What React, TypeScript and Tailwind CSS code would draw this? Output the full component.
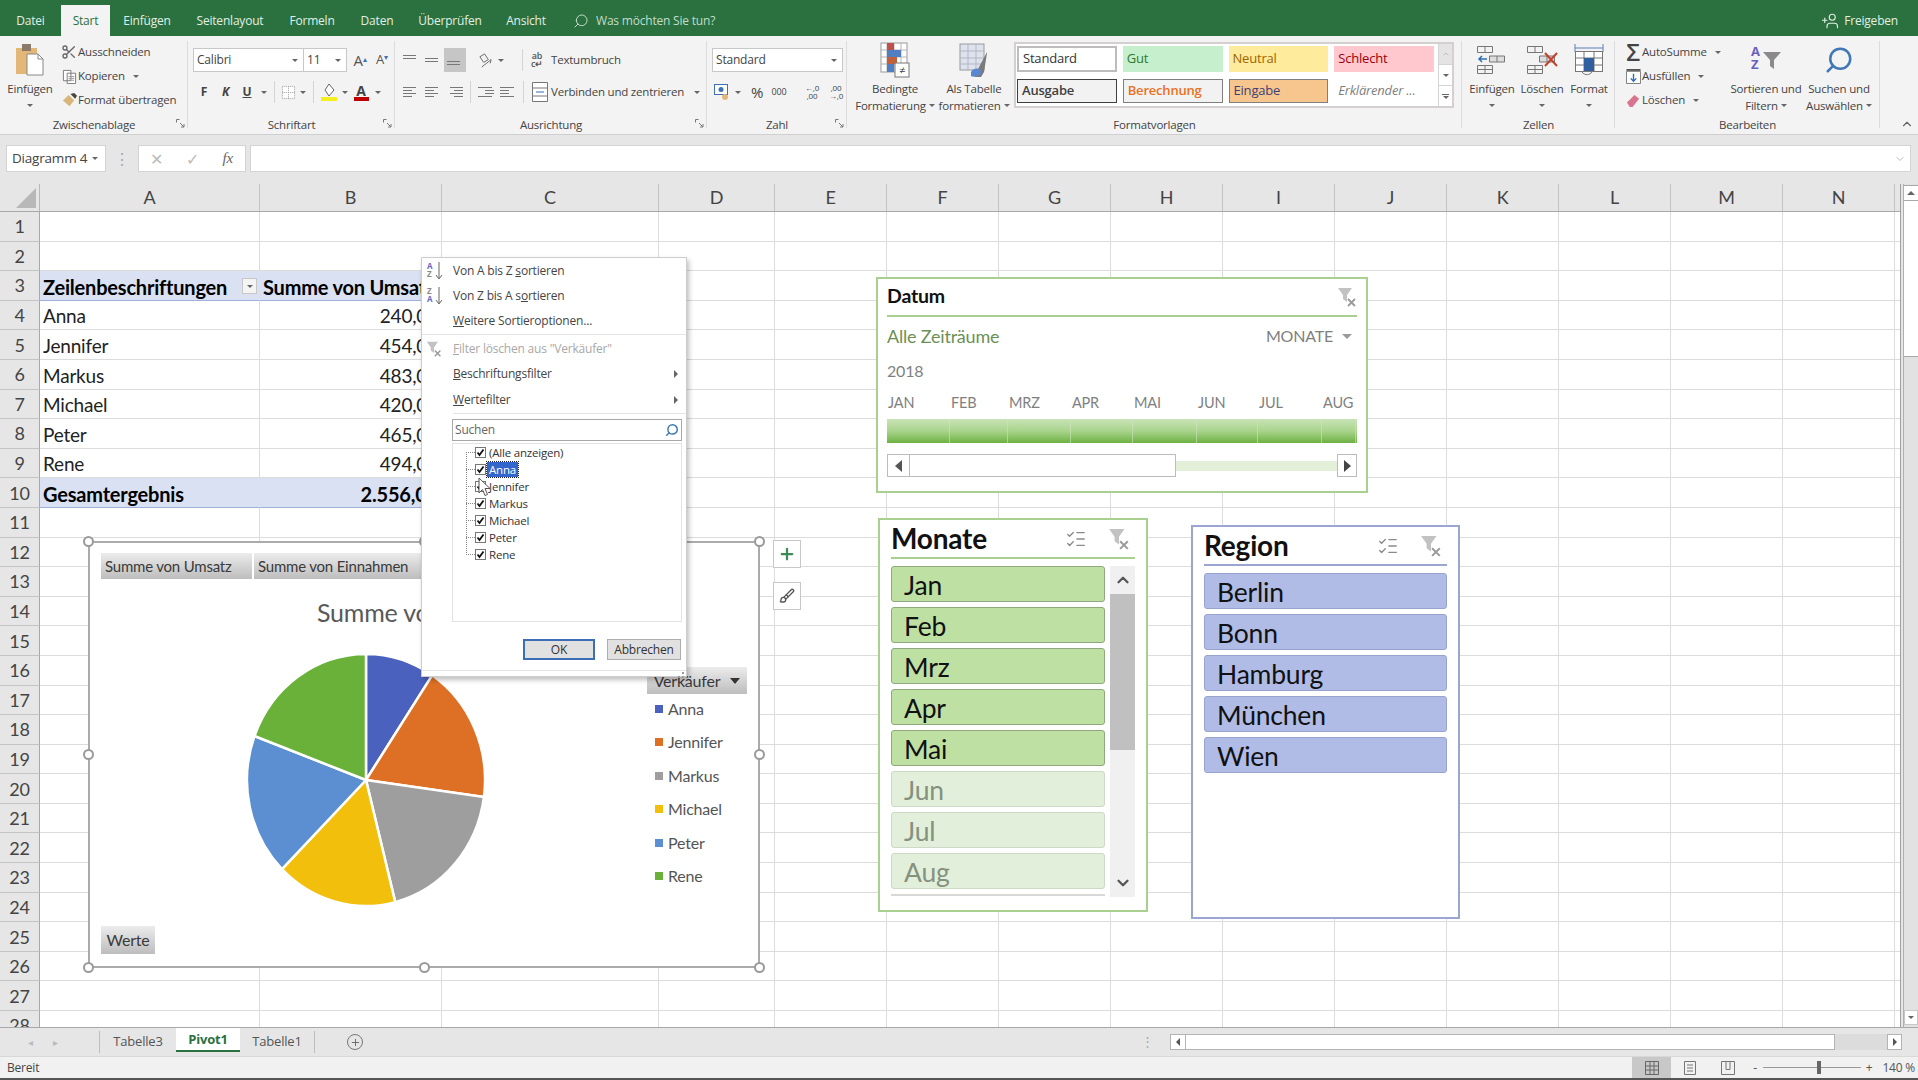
import { ReactNode } from 'react';
import { Scissors, Search, UserPlus, Plus, ChevronUp, ChevronDown, ListChecks, Brush } from 'lucide-react';

const calibri = "font-['Lato','Carlito',sans-serif]";

function Caret({ className = '' }: { className?: string }) {
  return <span className={`inline-block w-0 h-0 border-x-[3px] border-x-transparent border-t-[3px] border-t-[#666] ${className}`} />;
}

function Sep() {
  return <span className="w-px h-[22px] bg-[#d4d4d4] mx-[4px]" />;
}

function Launcher() {
  return (
    <svg viewBox="0 0 9 9" className="absolute right-[3px] bottom-[6px] w-[9px] h-[9px]" fill="none" stroke="#777">
      <path d="M0.5 3.5v-3h3M4 4l4 4M8 5v3H5" />
    </svg>
  );
}

function Group({ label, className, launcher, children }: { label: string; className: string; launcher?: boolean; children: ReactNode }) {
  return (
    <div className={`relative flex flex-col h-full ${className}`}>
      <div className="h-[80px] pt-[4px]">{children}</div>
      <div className="h-[18px] flex items-center justify-center text-[11.5px] text-[#444]">{label}</div>
      {launcher && <Launcher />}
      <div className="absolute right-0 top-[5px] bottom-[6px] w-px bg-[#dcdcdc]" />
    </div>
  );
}

function BigBtn({ icon, lines, caret, className }: { icon: ReactNode; lines: string[]; caret?: boolean; className: string }) {
  return (
    <div className={`flex flex-col items-center shrink-0 text-[11.5px] leading-[17px] text-[#444] ${className}`}>
      <div className="h-[40px] flex items-center justify-center">{icon}</div>
      {lines.map((l, i) => (
        <div key={l} className="flex items-center gap-[3px] whitespace-nowrap">
          {l}
          {caret && i === lines.length - 1 && lines.length > 1 && <Caret />}
        </div>
      ))}
      {caret && lines.length === 1 && <div className="h-[17px] flex items-center"><Caret /></div>}
    </div>
  );
}

function SmallBtn({ icon, text, caret }: { icon: ReactNode; text: string; caret?: boolean }) {
  return (
    <div className="h-[24px] flex items-center text-[11.5px] text-[#444] whitespace-nowrap">
      <span className="w-[18px] flex justify-center shrink-0">{icon}</span>
      <span>{text}</span>
      {caret && <Caret className="ml-[8px]" />}
    </div>
  );
}

function Lines({ rows, active }: { rows: number[]; active?: boolean }) {
  return (
    <svg viewBox="0 0 16 14" className="w-[16px] h-[14px]" stroke={active ? '#666' : '#777'} strokeWidth="1">
      {rows.map((w, i) => (
        <line key={i} x1={w < 0 ? 16 + w : 0} x2={w < 0 ? 16 : w} y1={2.5 + i * 3} y2={2.5 + i * 3} />
      ))}
    </svg>
  );
}

function Slot({ children, className = 'w-[22px]' }: { children: ReactNode; className?: string }) {
  return <span className={`h-[24px] flex items-center justify-center shrink-0 ${className}`}>{children}</span>;
}

function PasteIcon() {
  return (
    <svg viewBox="0 0 30 34" className="w-[30px] h-[34px]">
      <rect x="1" y="5" width="21" height="26" fill="#e3b777" />
      <rect x="7" y="1" width="9" height="7" fill="#8a7a6a" />
      <path d="M12 11h11l5 5v16H12z" fill="#fff" stroke="#888" />
      <path d="M23 11v5h5" fill="none" stroke="#888" />
    </svg>
  );
}

function CondIcon() {
  return (
    <svg viewBox="0 0 30 36" className="w-[30px] h-[36px]">
      <rect x="1" y="1" width="26" height="29" fill="#fff" stroke="#9a9a9a" />
      <path d="M7 1v29M14 1v29M21 1v29M1 8h26M1 15h26M1 22h26" stroke="#b5b5b5" />
      <rect x="7" y="1" width="7" height="7" fill="#c0504d" />
      <rect x="7" y="8" width="14" height="7" fill="#4f7fc0" />
      <rect x="7" y="15" width="10" height="7" fill="#c0603d" />
      <rect x="7" y="22" width="7" height="8" fill="#4f7fc0" />
      <rect x="15" y="21" width="14" height="14" fill="#fff" stroke="#777" />
      <text x="22" y="32" fontSize="11" textAnchor="middle" fill="#444">≠</text>
    </svg>
  );
}

function TableIcon() {
  return (
    <svg viewBox="0 0 30 36" className="w-[30px] h-[36px]">
      <rect x="1" y="2" width="24" height="26" fill="#dde2ee" stroke="#9a9a9a" />
      <path d="M9 2v26M17 2v26M1 9h24M1 16h24M1 22h24" stroke="#b3b7c2" />
      <path d="M28 10l-9 17-4 5 1 3h6l3-5 3-19z" fill="#7a7a7a" />
      <path d="M12 30c2-4 8-5 10-1s-7 7-10 5z" fill="#5a86cf" />
    </svg>
  );
}

function CellsIcon({ kind }: { kind: 'insert' | 'delete' | 'format' }) {
  if (kind === 'format') {
    return (
      <svg viewBox="0 0 30 34" className="w-[30px] h-[34px]" fill="none" stroke="#777">
        <path d="M1 5h28M1 1v8M29 1v8" stroke="#5b7fb5" />
        <rect x="1.500" y="8.500" width="27" height="20" fill="#fff" />
        <path d="M10 8v21M20 8v21M1 15h28M1 22h28" />
        <rect x="10" y="15" width="10" height="13" fill="#2f5f9f" stroke="none" />
        <path d="M8 29c3 4 8 3 10 0" />
      </svg>
    );
  }
  return (
    <svg viewBox="0 0 32 30" className="w-[32px] h-[30px]" fill="none" stroke="#777">
      <path d="M1.500 1.500h15v6h-15zM9 1.500v6M1.500 20.500h15v8h-15zM1.500 24.500h15M9 20.500v8" />
      <path d="M13.500 11h15v6h-15zM21 11v6" fill="#ddd" />
      {kind === 'insert' && <path d="M11 14H3M6 11l-3 3 3 3" stroke="#2f6fb5" strokeWidth="1.500" />}
      {kind === 'delete' && <path d="M19 8l12 13M31 8L19 21" stroke="#c8402c" strokeWidth="2" />}
    </svg>
  );
}

function FilterClear({ className = 'w-[20px] h-[20px]' }: { className?: string }) {
  return (
    <svg viewBox="0 0 20 20" className={className}>
      <path d="M1 1h14l-5 7v7l-4-3V8z" fill="#c2c2c2" />
      <path d="M11 12l7 7M18 12l-7 7" stroke="#9a9a9a" strokeWidth="1.800" />
    </svg>
  );
}

function SortIcon({ down }: { down: boolean }) {
  return (
    <span className="relative w-[16px] h-[18px] flex flex-col items-start text-[8px] leading-[8px] font-bold">
      <span className={down ? 'text-[#6a6ac0]' : 'text-[#888]'}>{down ? 'A' : 'Z'}</span>
      <span className={down ? 'text-[#888]' : 'text-[#6a6ac0]'}>{down ? 'Z' : 'A'}</span>
      <svg viewBox="0 0 8 18" className="absolute left-[8px] top-0 w-[8px] h-[18px]" fill="none" stroke="#666">
        <path d="M4 0v16M1 13l3 4 3-4" />
      </svg>
    </span>
  );
}

function Ribbon() {
  return (
    <div className="flex h-[99px] bg-[#f3f3f3] border-b border-[#cfcfcf]">
      <Group label="Zwischenablage" className="w-[188px]" launcher>
        <div className="flex">
          <BigBtn className="w-[60px]" icon={<PasteIcon />} lines={['Einfügen']} caret />
          <div className="flex flex-col">
            <SmallBtn icon={<Scissors size={16} color="#666" />} text="Ausschneiden" />
            <SmallBtn
              icon={
                <svg viewBox="0 0 16 16" className="w-[15px] h-[15px]" fill="#fff" stroke="#777">
                  <path d="M1.500 1.500h8v11h-8zM5.500 4.500h9v11h-9z" />
                  <path d="M7 8h6M7 10h6M7 12h6" stroke="#999" />
                </svg>
              }
              text="Kopieren"
              caret
            />
            <SmallBtn
              icon={
                <svg viewBox="0 0 16 16" className="w-[15px] h-[15px]">
                  <path d="M1 8l6-6 6 6-5 6z" fill="#d8b67a" />
                  <path d="M9 1l4-1 3 3-2 3z" fill="#444" />
                </svg>
              }
              text="Format übertragen"
            />
          </div>
        </div>
      </Group>
      <Group label="Schriftart" className="w-[207px]" launcher>
        <div className="pl-[5px] pt-[8px] flex flex-col gap-[8px]">
          <div className="h-[24px] flex items-center">
            <div className="w-[111px] h-[24px] bg-white border border-[#c8c8c8] flex items-center justify-between px-[3px] text-[12px] text-[#444]">
              Calibri <Caret className="mr-[2px]" />
            </div>
            <div className="w-[43px] h-[24px] bg-white border border-l-0 border-[#c8c8c8] flex items-center justify-between px-[3px] text-[12px] text-[#444]">
              11 <Caret className="mr-[2px]" />
            </div>
            <Slot className="w-[22px] ml-[2px]"><span className="text-[15px] text-[#555]">A<sup className="text-[8px] text-[#3f6fb5]">▴</sup></span></Slot>
            <Slot className="w-[22px]"><span className="text-[13px] text-[#555]">A<sup className="text-[8px] text-[#3f6fb5]">▾</sup></span></Slot>
          </div>
          <div className="h-[24px] flex items-center text-[12px] text-[#444]">
            <Slot className="w-[22px]"><b>F</b></Slot>
            <Slot className="w-[21px]"><b className="italic">K</b></Slot>
            <Slot className="w-[22px]"><b className="underline">U</b></Slot>
            <Slot className="w-[12px]"><Caret /></Slot>
            <Sep />
            <Slot className="w-[18px]">
              <svg viewBox="0 0 16 16" className="w-[15px] h-[15px]" fill="#fff" stroke="#999">
                <path d="M1.500 1.500h13v13h-13zM8 1.500v13M1.500 8h13" strokeDasharray="1 1" />
              </svg>
            </Slot>
            <Slot className="w-[12px]"><Caret /></Slot>
            <Sep />
            <Slot className="w-[22px]">
              <svg viewBox="0 0 16 18" className="w-[16px] h-[18px]">
                <path d="M8 1l5 6-5 6-4-6z" fill="#fff" stroke="#666" />
                <rect x="0" y="14" width="16" height="4" fill="#f4f01e" />
              </svg>
            </Slot>
            <Slot className="w-[10px]"><Caret /></Slot>
            <Slot className="w-[22px]">
              <span className="flex flex-col items-center leading-[13px] font-bold text-[#444] text-[14px]">
                A
                <span className="w-[15px] h-[4px] bg-[#c00000]" />
              </span>
            </Slot>
            <Slot className="w-[12px]"><Caret /></Slot>
          </div>
        </div>
      </Group>
      <Group label="Ausrichtung" className="w-[312px]" launcher>
        <div className="pl-[5px] pt-[8px] flex flex-col gap-[8px] text-[11.5px] text-[#444]">
          <div className="h-[24px] flex items-center">
            <Slot><Lines rows={[13, 13]} /></Slot>
            <Slot><Lines rows={[0, 13, 13]} /></Slot>
            <Slot className="w-[22px] bg-[#c6c6c6]"><Lines rows={[0, 0, 13, 13]} /></Slot>
            <Slot className="w-[22px] ml-[8px]">
              <svg viewBox="0 0 16 16" className="w-[15px] h-[15px]" fill="none" stroke="#666">
                <path d="M2 4l5-3 4 6-5 3zM4 15l10-8M14 7l-1 4" />
              </svg>
            </Slot>
            <Slot className="w-[10px]"><Caret /></Slot>
            <span className="w-px h-[22px] bg-[#d4d4d4] ml-[16px]" />
            <Slot className="w-[28px]">
              <span className="text-[9px] leading-[8px] font-semibold text-center text-[#555]">ab<br />c↵</span>
            </Slot>
            <span>Textumbruch</span>
          </div>
          <div className="h-[24px] flex items-center">
            <Slot><Lines rows={[13, 9, 13, 9]} /></Slot>
            <Slot><Lines rows={[13, 9, 13, 9]} /></Slot>
            <Slot><Lines rows={[-13, -9, -13, -9]} /></Slot>
            <span className="w-px h-[22px] bg-[#d4d4d4] mx-[4px]" />
            <Slot><Lines rows={[14, -9, -9, 14]} /></Slot>
            <Slot><Lines rows={[14, 9, 9, 14]} /></Slot>
            <span className="w-px h-[22px] bg-[#d4d4d4] mx-[4px]" />
            <Slot className="w-[23px]">
              <svg viewBox="0 0 16 20" className="w-[16px] h-[20px]" fill="#fff" stroke="#777">
                <path d="M0.500 0.500h15v19h-15zM0.500 6h15M0.500 14h15" />
                <path d="M4 10h8" stroke="#2f6fb5" />
              </svg>
            </Slot>
            <span>Verbinden und zentrieren</span>
            <Caret className="ml-[10px]" />
          </div>
        </div>
      </Group>
      <Group label="Zahl" className="w-[140px]" launcher>
        <div className="pl-[5px] pt-[8px] flex flex-col gap-[8px] text-[12px] text-[#444]">
          <div className="w-[131px] h-[24px] bg-white border border-[#c8c8c8] flex items-center justify-between px-[3px]">
            Standard <Caret className="mr-[2px]" />
          </div>
          <div className="h-[24px] flex items-center">
            <Slot className="w-[20px]">
              <svg viewBox="0 0 16 16" className="w-[16px] h-[16px]">
                <rect x="0.500" y="0.500" width="13" height="10" fill="#fff" stroke="#3f6fb5" />
                <circle cx="7" cy="5.500" r="2.500" fill="#3f6fb5" />
                <circle cx="11" cy="13" r="3" fill="#e3b777" />
              </svg>
            </Slot>
            <Slot className="w-[12px]"><Caret /></Slot>
            <Slot className="w-[26px] text-[15px]">%</Slot>
            <Slot className="w-[18px] text-[9px]">000</Slot>
            <span className="w-px h-[22px] bg-[#d4d4d4] mx-[6px]" />
            <Slot className="w-[24px] text-[8px] leading-[8px] text-center"><span>←,0<br />,00</span></Slot>
            <Slot className="w-[24px] text-[8px] leading-[8px] text-center"><span>,00<br />→,0</span></Slot>
          </div>
        </div>
      </Group>
      <Group label="Formatvorlagen" className="w-[615px]">
        <div className="flex pl-[8px]">
          <BigBtn className="w-[80px]" icon={<CondIcon />} lines={['Bedingte', 'Formatierung']} caret />
          <BigBtn className="w-[78px]" icon={<TableIcon />} lines={['Als Tabelle', 'formatieren']} caret />
          <div className="flex mt-[2px] ml-[1px] h-[66px] w-[440px] bg-white border-2 border-[#d4d0d0]">
            <div className="flex-1 grid grid-cols-4 gap-x-[6px] gap-y-[5px] py-[2px] pl-[1px] pr-[4px] text-[13px]">
              <div className="h-[26px] border-2 border-[#bdbdbd] px-[4px] flex items-center text-[#333]">Standard</div>
              <div className="h-[26px] bg-[#c6efce] px-[4px] flex items-center text-[#2c7a2c]">Gut</div>
              <div className="h-[26px] bg-[#ffeb9c] px-[4px] flex items-center text-[#9c6500]">Neutral</div>
              <div className="h-[26px] bg-[#ffc7ce] px-[4px] flex items-center text-[#9c0006]">Schlecht</div>
              <div className="h-[24px] bg-[#f2f2f2] border border-[#3f3f3f] px-[4px] flex items-center font-semibold text-[#3f3f3f]">Ausgabe</div>
              <div className="h-[24px] bg-[#f2f2f2] border border-[#7f7f7f] px-[4px] flex items-center font-semibold text-[#e8701e]">Berechnung</div>
              <div className="h-[24px] bg-[#f7c68f] border border-[#7f7f7f] px-[4px] flex items-center text-[#3f3f76]">Eingabe</div>
              <div className="h-[24px] px-[4px] flex items-center italic text-[#7f7f7f] whitespace-nowrap">Erklärender ...</div>
            </div>
            <div className="w-[14px] flex flex-col border-l border-[#d4d4d4] bg-white">
              <div className="flex-1 bg-[#e4e4e4] flex items-center justify-center"><ChevronUp size={8} color="#aaa" /></div>
              <div className="flex-1 border-y border-[#d4d4d4] flex items-center justify-center"><Caret /></div>
              <div className="flex-1 flex flex-col items-center justify-center gap-[1px]"><span className="w-[7px] h-px bg-[#666]" /><Caret /></div>
            </div>
          </div>
        </div>
      </Group>
      <Group label="Zellen" className="w-[153px]">
        <div className="flex pl-[6px]">
          <BigBtn className="w-[48px]" icon={<CellsIcon kind="insert" />} lines={['Einfügen']} caret />
          <BigBtn className="w-[52px]" icon={<CellsIcon kind="delete" />} lines={['Löschen']} caret />
          <BigBtn className="w-[42px]" icon={<CellsIcon kind="format" />} lines={['Format']} caret />
        </div>
      </Group>
      <Group label="Bearbeiten" className="w-[265px]">
        <div className="flex pl-[9px]">
          <div className="flex flex-col w-[109px]">
            <SmallBtn icon={<span className="text-[24px] leading-[20px] font-semibold text-[#444]">Σ</span>} text="AutoSumme" caret />
            <SmallBtn
              icon={
                <svg viewBox="0 0 16 16" className="w-[15px] h-[15px]" fill="#fff" stroke="#777">
                  <path d="M0.500 2.500h15v13h-15z" />
                  <path d="M0.500 1h15" strokeWidth="2" stroke="#555" />
                  <path d="M8 5v8M5 10l3 3 3-3" stroke="#2f6fb5" fill="none" strokeWidth="1.500" />
                </svg>
              }
              text="Ausfüllen"
              caret
            />
            <SmallBtn
              icon={
                <svg viewBox="0 0 16 16" className="w-[15px] h-[15px]">
                  <path d="M1 10l8-8 5 4-7 9H4z" fill="#d9748f" />
                </svg>
              }
              text="Löschen"
              caret
            />
          </div>
          <BigBtn
            className="w-[66px]"
            icon={
              <span className="relative w-[30px] h-[30px] text-[13px] leading-[13px] font-bold text-[#6a5fc0]">
                A<br />Z
                <svg viewBox="0 0 18 18" className="absolute left-[12px] top-[7px] w-[18px] h-[18px]"><path d="M0 0h18l-7 8v9l-4-3V8z" fill="#8a8a8a" /></svg>
              </span>
            }
            lines={['Sortieren und', 'Filtern']}
            caret
          />
          <BigBtn
            className="w-[80px]"
            icon={<Search size={30} color="#3f78b5" strokeWidth={2} className="-scale-x-100" />}
            lines={['Suchen und', 'Auswählen']}
            caret
          />
        </div>
      </Group>
      <div className="flex-1 relative">
        <ChevronUp size={14} color="#666" className="absolute right-[4px] bottom-[3px]" />
      </div>
    </div>
  );
}

const colWidths = [
  'w-[220px]', 'w-[182px]', 'w-[217px]', 'w-[116px]',
  'w-[112px]', 'w-[112px]', 'w-[112px]', 'w-[112px]', 'w-[112px]',
  'w-[112px]', 'w-[112px]', 'w-[112px]', 'w-[112px]', 'w-[112px]',
];
const colNames = ['A', 'B', 'C', 'D', 'E', 'F', 'G', 'H', 'I', 'J', 'K', 'L', 'M', 'N'];

const pivot: Record<number, [string, string]> = {
  3: ['Zeilenbeschriftungen', 'Summe von Umsatz'],
  4: ['Anna', '240,00'],
  5: ['Jennifer', '454,00'],
  6: ['Markus', '483,00'],
  7: ['Michael', '420,00'],
  8: ['Peter', '465,00'],
  9: ['Rene', '494,00'],
  10: ['Gesamtergebnis', '2.556,00'],
};

function Sheet() {
  const rows = Array.from({ length: 28 }, (_, i) => i + 1);
  return (
    <div className={`h-[843px] overflow-hidden flex bg-[#e6e6e6] ${calibri}`}>
      <div className="w-[1901px] shrink-0 bg-white border-r border-[#a0a0a0]">
        <div className="flex h-[28px] bg-[#e6e6e6] border-b border-[#a8a8a8]">
          <div className="w-[40px] shrink-0 border-r border-[#b8b8b8] relative">
            <div className="absolute right-[3px] bottom-[3px] w-0 h-0 border-l-[20px] border-l-transparent border-b-[20px] border-b-[#b8b8b8]" />
          </div>
          {colNames.map((c, i) => (
            <div key={c} className={`${colWidths[i]} shrink-0 flex items-center justify-center text-[18px] text-[#444] border-r border-[#c4c4c4]`}>{c}</div>
          ))}
        </div>
        {rows.map((r) => {
          const band = r === 3 || r === 10;
          const data = pivot[r];
          return (
            <div key={r} className="flex h-[29.6px]">
              <div className="w-[40px] shrink-0 bg-[#e6e6e6] border-r border-[#a8a8a8] border-b border-b-[#c4c4c4] flex items-center justify-center pt-[1px] text-[18px] text-[#444]">{r}</div>
              {colNames.map((c, i) => (
                <div
                  key={c}
                  className={`${colWidths[i]} shrink-0 relative flex items-center pt-[3px] whitespace-nowrap border-r border-b border-[#dcdcdc] ${band && i < 3 ? 'bg-[#d9e1f2] border-r-[#d9e1f2] border-b-[#9fb0dc] font-bold text-black text-[20px]' : 'text-[19px] text-[#222]'}`}
                >
                  {data && i === 0 && <span className="pl-[3px]">{data[0]}</span>}
                  {data && i === 1 && (r === 3 ? <span className="pl-[3px]">{data[1]}</span> : <span className="ml-auto pr-[3px]">{data[1]}</span>)}
                  {r === 3 && i === 0 && (
                    <span className="absolute right-[2px] top-[7px] w-[15px] h-[16px] bg-[#f4f4f4] border border-[#c8c8c8] flex items-center justify-center"><Caret /></span>
                  )}
                </div>
              ))}
              <div className="flex-1 border-b border-[#dcdcdc]" />
            </div>
          );
        })}
      </div>
      <div className="flex-1 flex flex-col ml-[2px] border-l border-[#b0b0b0] bg-[#e2e2e2]">
        <div className="h-[16px] mt-[1px] bg-white border-y border-[#a8a8a8] flex items-center justify-center">
          <span className="w-0 h-0 border-x-[4px] border-x-transparent border-b-[4px] border-b-[#666]" />
        </div>
        <div className="h-[156px] bg-white border-b border-[#a8a8a8]" />
        <div className="flex-1" />
        <div className="h-[15px] mb-[2px] bg-white border border-[#c8c8c8] flex items-center justify-center"><Caret /></div>
      </div>
    </div>
  );
}

function Handle({ className }: { className: string }) {
  return <span className={`absolute w-[11px] h-[11px] rounded-full bg-white border-2 border-[#9a9a9a] ${className}`} />;
}

const sellers = [
  { name: 'Anna', value: 240, color: '#4a62bd', swatch: 'bg-[#4a62bd]' },
  { name: 'Jennifer', value: 454, color: '#dd7024', swatch: 'bg-[#dd7024]' },
  { name: 'Markus', value: 483, color: '#9e9e9e', swatch: 'bg-[#9e9e9e]' },
  { name: 'Michael', value: 420, color: '#f2bf0c', swatch: 'bg-[#f2bf0c]' },
  { name: 'Peter', value: 465, color: '#5b8fd1', swatch: 'bg-[#5b8fd1]' },
  { name: 'Rene', value: 494, color: '#69b138', swatch: 'bg-[#69b138]' },
];

function Pie() {
  const total = sellers.reduce((s, x) => s + x.value, 0);
  const pt = (a: number) => [120 + 119 * Math.sin(a), 127 - 126 * Math.cos(a)];
  let acc = 0;
  return (
    <svg viewBox="0 0 240 254" className="w-[240px] h-[254px]">
      {sellers.map((s) => {
        const a0 = (acc / total) * Math.PI * 2;
        acc += s.value;
        const a1 = (acc / total) * Math.PI * 2;
        const [x0, y0] = pt(a0);
        const [x1, y1] = pt(a1);
        return <path key={s.name} d={`M120 127L${x0} ${y0}A119 126 0 0 1 ${x1} ${y1}Z`} fill={s.color} stroke="#fff" strokeWidth="2.500" />;
      })}
    </svg>
  );
}

const chartBtn = 'absolute flex items-center bg-gradient-to-b from-[#ececec] to-[#bdbdbd] text-[#3a3a3a] whitespace-nowrap';

function Chart() {
  return (
    <div className={`absolute left-[88px] top-[541px] w-[672px] h-[427px] bg-white border-2 border-[#ababab] ${calibri}`}>
      <div className={`${chartBtn} left-[11px] top-[10px] w-[151px] h-[26px] text-[15px] pl-[4px]`}>Summe von Umsatz</div>
      <div className={`${chartBtn} left-[164px] top-[10px] w-[168px] h-[26px] text-[15px] pl-[4px]`}>Summe von Einnahmen</div>
      <div className="absolute left-[227px] top-[53px] text-[25px] leading-[32px] text-[#595959] whitespace-nowrap">Summe von Umsatz</div>
      <div className="absolute left-[156px] top-[110px]"><Pie /></div>
      <div className={`${chartBtn} justify-center left-[557px] top-[124px] w-[100px] h-[27px] text-[16px] gap-[10px]`}>
        Verkäufer <span className="w-0 h-0 border-x-[5px] border-x-transparent border-t-[6px] border-t-[#333]" />
      </div>
      <div className="absolute left-[565px] top-[149px] flex flex-col">
        {sellers.map((s) => (
          <div key={s.name} className="h-[33.5px] flex items-center gap-[5px] text-[16px] text-[#555]">
            <span className={`w-[8px] h-[8px] ${s.swatch}`} />
            {s.name}
          </div>
        ))}
      </div>
      <div className={`${chartBtn} justify-center left-[11px] top-[383px] w-[54px] h-[28px] text-[16px]`}>Werte</div>
      <Handle className="-left-[7px] -top-[7px]" />
      <Handle className="left-[329px] -top-[7px]" />
      <Handle className="-right-[7px] -top-[7px]" />
      <Handle className="-left-[7px] top-[206px]" />
      <Handle className="-right-[7px] top-[206px]" />
      <Handle className="-left-[7px] -bottom-[7px]" />
      <Handle className="left-[329px] -bottom-[7px]" />
      <Handle className="-right-[7px] -bottom-[7px]" />
    </div>
  );
}

function FilterMenu() {
  const names = ['(Alle anzeigen)', 'Anna', 'Jennifer', 'Markus', 'Michael', 'Peter', 'Rene'];
  const row = 'h-[25.4px] flex items-center text-[12px] text-[#444] whitespace-nowrap';
  return (
    <div className="absolute left-[421px] top-[257px] w-[266px] h-[420px] bg-white border border-[#cdcdcd] shadow-[2px_3px_5px_rgba(0,0,0,0.25)] flex flex-col">
      <div className={row}><span className="w-[31px] pl-[5px]"><SortIcon down /></span><span>Von A bis Z <u>s</u>ortieren</span></div>
      <div className={row}><span className="w-[31px] pl-[5px]"><SortIcon down={false} /></span><span>Von Z bis A s<u>o</u>rtieren</span></div>
      <div className={row}><span className="w-[31px]" /><span><u>W</u>eitere Sortieroptionen...</span></div>
      <div className="h-px mb-[1px] bg-[#e4e4e4]" />
      <div className={`${row} text-[#a8a8a8]`}><span className="w-[31px] pl-[4px]"><FilterClear className="w-[16px] h-[16px]" /></span><span><u>F</u>ilter löschen aus "Verkäufer"</span></div>
      <div className={`${row} justify-between pr-[8px]`}><span className="pl-[31px]"><u>B</u>eschriftungsfilter</span><span className="w-0 h-0 border-y-[4px] border-y-transparent border-l-[4px] border-l-[#666]" /></div>
      <div className={`${row} justify-between pr-[8px]`}><span className="pl-[31px]"><u>W</u>ertefilter</span><span className="w-0 h-0 border-y-[4px] border-y-transparent border-l-[4px] border-l-[#666]" /></div>
      <div className="h-px mt-[1px] bg-[#e4e4e4] ml-[31px]" />
      <div className="ml-[30px] mt-[5px] w-[230px] h-[22px] border border-[#a8a8a8] flex items-center justify-between px-[2px] text-[12px] text-[#666]">
        Suchen
        <Search size={14} color="#3f78b5" strokeWidth={2.5} className="-scale-x-100" />
      </div>
      <div className="relative ml-[30px] mt-[2px] w-[230px] h-[179px] border border-[#e2e2e2]">
        <div className="absolute left-[13px] top-[8px] h-[103px] border-l border-dotted border-[#888]" />
        {names.map((n) => (
          <div key={n} className="relative h-[17px] flex items-center pl-[22px] text-[11.5px] text-[#333]">
            <span className="absolute left-[13px] w-[9px] border-t border-dotted border-[#888]" />
            <span className="relative w-[11px] h-[11px] bg-white border border-[#777] shrink-0">
              <svg viewBox="0 0 11 11" className="absolute -left-px -top-px w-[11px] h-[11px]" fill="none" stroke="#111" strokeWidth="1.800"><path d="M2.500 5.500l2 2.500 4-5.500" /></svg>
            </span>
            {n === 'Anna' ? (
              <span className="ml-[1px] px-[2px] bg-[#3366cc] text-white outline-1 outline-dotted outline-[#222] leading-[15px]">{n}</span>
            ) : (
              <span className="ml-[3px]">{n}</span>
            )}
          </div>
        ))}
      </div>
      <div className="flex justify-end gap-[12px] mt-[17px] pr-[5px] text-[12px] text-[#333]">
        <div className="w-[72px] h-[21px] bg-[#e1e1e1] border-2 border-[#3d6db5] flex items-center justify-center">OK</div>
        <div className="w-[74px] h-[21px] bg-[#e1e1e1] border border-[#adadad] flex items-center justify-center">Abbrechen</div>
      </div>
      <div className="relative h-px mt-[10px] bg-[#e4e4e4]">
        <span className="absolute right-[2px] top-[2px] w-[6px] h-[6px] border-r-2 border-b-2 border-dotted border-[#999]" />
      </div>
      <svg viewBox="0 0 12 20" className="absolute left-[56px] top-[219px] w-[12px] h-[20px]">
        <path d="M1 1v15l3.500-3.500 2.500 6 2.500-1-2.500-6h5z" fill="#fff" stroke="#555" />
      </svg>
    </div>
  );
}

function TimelineSlicer() {
  const months = [
    ['JAN', 'w-[63px]'], ['FEB', 'w-[58px]'], ['MRZ', 'w-[63px]'], ['APR', 'w-[62px]'],
    ['MAI', 'w-[64px]'], ['JUN', 'w-[61px]'], ['JUL', 'w-[64px]'], ['AUG', 'w-[34px]'],
  ];
  return (
    <div className={`absolute left-[876px] top-[277px] w-[492px] h-[216px] bg-white border-2 border-[#a9d08e] px-[9px] ${calibri}`}>
      <div className="h-[38px] flex items-center justify-between border-b-2 border-[#a9d08e]">
        <span className="font-bold text-[19.5px] text-[#111] -mt-[2px]">Datum</span>
        <FilterClear className="w-[20px] h-[22px]" />
      </div>
      <div className="h-[38px] flex items-center justify-between">
        <span className="text-[18px] text-[#6d8f55]">Alle Zeiträume</span>
        <span className="flex items-center gap-[9px] text-[16px] text-[#7f7f7f] pr-[5px]">MONATE <span className="w-0 h-0 border-x-[5px] border-x-transparent border-t-[5px] border-t-[#9a9a9a]" /></span>
      </div>
      <div className="h-[32px] flex items-center text-[16px] text-[#7f7f7f]">2018</div>
      <div className="h-[32px] flex items-center text-[14.5px] text-[#7f7f7f]">
        {months.map(([m, w]) => <span key={m} className={`${w} pl-[1px]`}>{m}</span>)}
      </div>
      <div className="flex h-[24px] bg-gradient-to-b from-[#c9e3b7] via-[#a9d48c] to-[#6db13f]">
        {months.map(([m, w]) => <span key={m} className={`${w} border-r border-[#cfe4c0]/60`} />)}
      </div>
      <div className="flex items-center h-[23px] mt-[11px]">
        <div className="w-[23px] h-full bg-white border border-[#bcbcbc] flex items-center justify-center"><span className="w-0 h-0 border-y-[6px] border-y-transparent border-r-[7px] border-r-[#555]" /></div>
        <div className="w-[266px] h-full bg-white border border-l-0 border-[#bcbcbc]" />
        <div className="w-[161px] h-[10px] bg-[#e4efda]" />
        <div className="w-[20px] h-full bg-white border border-[#bcbcbc] flex items-center justify-center"><span className="w-0 h-0 border-y-[6px] border-y-transparent border-l-[7px] border-l-[#444]" /></div>
      </div>
    </div>
  );
}

function Slicer({ title, items, className, lineClass, itemClass, dimmedFrom, scroll }: {
  title: string;
  items: string[];
  className: string;
  lineClass: string;
  itemClass: string;
  dimmedFrom?: number;
  scroll?: boolean;
}) {
  return (
    <div className={`absolute bg-white border-2 px-[11px] ${calibri} ${className}`}>
      <div className={`h-[39px] flex items-center justify-between border-b-2 ${lineClass} pr-[5px]`}>
        <span className="font-bold text-[28px] text-[#111] -mt-[2px]">{title}</span>
        <span className="flex items-center gap-[21px]">
          <ListChecks size={22} color="#8a8a8a" strokeWidth={1.5} />
          <FilterClear className="w-[22px] h-[22px]" />
        </span>
      </div>
      <div className="flex gap-[5px] mt-[7px]">
        <div className="flex-1 flex flex-col gap-[5px] overflow-hidden h-[331px]">
          {items.map((it, i) => (
            <div
              key={it}
              className={`h-[36px] shrink-0 rounded-[3px] border pl-[12px] pt-[3px] flex items-center text-[26.5px] ${
                dimmedFrom !== undefined && i >= dimmedFrom ? 'bg-[#e2efda] border-[#cdd9c5] text-[#85917f]' : `${itemClass} text-[#111]`
              }`}
            >
              {it}
            </div>
          ))}
          {scroll && <div className="h-[2px] shrink-0 bg-[#d8d8d8]" />}
        </div>
        {scroll && (
          <div className="w-[25px] h-[331px] flex flex-col bg-[#f0f0f0]">
            <div className="h-[28px] flex items-center justify-center"><ChevronUp size={18} color="#555" strokeWidth={3} /></div>
            <div className="h-[156px] bg-[#c0c0c0]" />
            <div className="flex-1" />
            <div className="h-[28px] flex items-center justify-center"><ChevronDown size={18} color="#555" strokeWidth={3} /></div>
          </div>
        )}
      </div>
    </div>
  );
}

export default function App() {
  return (
    <div className="relative w-[1918px] h-[1080px] overflow-hidden bg-white font-['Open_Sans','Noto_Sans',sans-serif] tracking-[-0.2px]">
      <div className="relative h-[36px] bg-[#2a713f] flex items-end text-[12px] text-[#e2efe6]">
        {[
          ['Datei', 'w-[61px]'], ['Start', 'w-[49px]'], ['Einfügen', 'w-[74px]'], ['Seitenlayout', 'w-[92px]'],
          ['Formeln', 'w-[72px]'], ['Daten', 'w-[58px]'], ['Überprüfen', 'w-[88px]'], ['Ansicht', 'w-[64px]'],
        ].map(([t, w]) => (
          <div key={t} className={`h-[31px] flex items-center justify-center ${w} ${t === 'Start' ? 'bg-[#f3f3f3] text-[#2a713f]' : ''}`}>{t}</div>
        ))}
        <div className="h-[31px] flex items-center ml-[15px] text-[#c2dccb]">
          <Search size={16} strokeWidth={1.5} className="-scale-x-100 mr-[7px]" />
          Was möchten Sie tun?
        </div>
        <div className="ml-auto h-[31px] flex items-center pr-[20px]">
          <UserPlus size={18} strokeWidth={1.5} className="-scale-x-100 mr-[5px]" />
          Freigeben
        </div>
      </div>

      <Ribbon />

      <div className="h-[49px] bg-[#e6e6e6] flex items-start pt-[10px]">
        <div className="ml-[6px] w-[100px] h-[27px] bg-white border border-[#d4d4d4] flex items-center justify-between px-[5px] text-[13.5px] text-[#444]">
          Diagramm 4 <Caret className="mr-[2px]" />
        </div>
        <div className="w-[32px] h-[27px] flex items-center justify-center text-[#aaa]">⋮</div>
        <div className="w-[108px] h-[27px] bg-white border border-[#d4d4d4] flex items-center justify-between text-[16px] text-[#bbb] pl-[11px] pr-[12px]">
          <span>✕</span>
          <span>✓</span>
          <i className="font-['Liberation_Serif',serif] text-[#666] text-[15px]">fx</i>
        </div>
        <div className="ml-[4px] w-[1661px] h-[27px] bg-white border border-[#d4d4d4] flex items-center justify-end pr-[4px]">
          <ChevronDown size={12} color="#bbb" />
        </div>
      </div>

      <Sheet />

      <div className="h-[29px] bg-[#e6e6e6] border-t border-[#a8a8a8] flex items-stretch text-[13px] text-[#555]">
        <div className="w-[100px] border-r border-[#bdbdbd] my-[3px] flex items-center justify-center gap-[20px] text-[#bbb] text-[10px] pr-[14px]">
          <span>◂</span>
          <span>▸</span>
        </div>
        <div className="w-[76px] flex items-center justify-center">Tabelle3</div>
        <div className="w-[64px] bg-white border-b-2 border-[#2a713f] mb-[4px] pt-[2px] flex items-center justify-center font-bold text-[#2a713f]">Pivot1</div>
        <div className="w-[75px] border-r border-[#bdbdbd] my-[3px] flex items-center justify-center">Tabelle1</div>
        <div className="ml-[32px] flex items-center">
          <span className="w-[16px] h-[16px] rounded-full border border-[#777] flex items-center justify-center"><Plus size={11} color="#666" /></span>
        </div>
        <div className="ml-auto flex items-center">
          <div className="w-[15px] h-[17px] mr-[15px] text-[#aaa] flex items-center justify-center">⋮</div>
          <div className="w-[732px] h-[16px] mr-[16px] flex items-stretch bg-[#dcdcdc]">
            <div className="w-[16px] bg-white border border-[#b4b4b4] flex items-center justify-center"><span className="w-0 h-0 border-y-[4px] border-y-transparent border-r-[4px] border-r-[#555]" /></div>
            <div className="w-[649px] bg-white border border-l-0 border-[#b4b4b4]" />
            <div className="flex-1" />
            <div className="w-[15px] bg-white border border-[#b4b4b4] flex items-center justify-center"><span className="w-0 h-0 border-y-[4px] border-y-transparent border-l-[4px] border-l-[#555]" /></div>
          </div>
        </div>
      </div>

      <div className="h-[22px] bg-[#f1f1f1] border-t border-[#d8d8d8] flex items-center text-[12px] text-[#444] pl-[7px]">
        Bereit
        <div className="ml-auto flex items-center h-full">
          <span className="w-[39px] h-full bg-[#c8c8c8] flex items-center justify-center">
            <svg viewBox="0 0 14 14" className="w-[14px] h-[14px]" fill="none" stroke="#666"><path d="M0.500 0.500h13v13h-13zM5 0.500v13M9 0.500v13M0.500 5h13M0.500 9h13" /></svg>
          </span>
          <span className="w-[38px] flex items-center justify-center">
            <svg viewBox="0 0 14 14" className="w-[14px] h-[14px]" fill="none" stroke="#777"><path d="M1.500 0.500h11v13h-11zM4 4h6M4 7h6M4 10h6" /></svg>
          </span>
          <span className="w-[38px] flex items-center justify-center">
            <svg viewBox="0 0 14 14" className="w-[14px] h-[14px]" fill="none" stroke="#777"><path d="M0.500 0.500h13v13h-13zM5 0.500v8h4v-8" /></svg>
          </span>
          <span className="ml-[4px] w-[8px] text-center text-[#555]">-</span>
          <span className="relative w-[98px] mx-[4px] h-px bg-[#999]">
            <span className="absolute left-[54px] -top-[6px] w-[4px] h-[13px] bg-[#666]" />
          </span>
          <span className="w-[8px] text-center text-[#555]">+</span>
          <span className="w-[45px] text-right pr-[3px] text-[#555] whitespace-nowrap">140 %</span>
        </div>
      </div>
      <div className="h-[2px] bg-[#555]" />

      <Chart />
      <div className="absolute left-[773px] top-[540px] w-[28px] h-[28px] bg-white border border-[#c8c8c8] flex items-center justify-center">
        <Plus size={18} color="#3c8a56" strokeWidth={3} />
      </div>
      <div className="absolute left-[773px] top-[582px] w-[28px] h-[28px] bg-white border border-[#c8c8c8] flex items-center justify-center">
        <Brush size={16} color="#555" />
      </div>
      <FilterMenu />
      <TimelineSlicer />
      <Slicer
        title="Monate"
        items={['Jan', 'Feb', 'Mrz', 'Apr', 'Mai', 'Jun', 'Jul', 'Aug']}
        className="left-[878px] top-[518px] w-[270px] h-[394px] border-[#a9d08e]"
        lineClass="border-[#a9d08e]"
        itemClass="bg-[#bfe0a3] border-[#8fa87e]"
        dimmedFrom={5}
        scroll
      />
      <Slicer
        title="Region"
        items={['Berlin', 'Bonn', 'Hamburg', 'München', 'Wien']}
        className="left-[1191px] top-[525px] w-[269px] h-[394px] border-[#9aa5d0]"
        lineClass="border-[#9aa5d0]"
        itemClass="bg-[#b0bce6] border-[#97a4cf]"
      />
    </div>
  );
}
